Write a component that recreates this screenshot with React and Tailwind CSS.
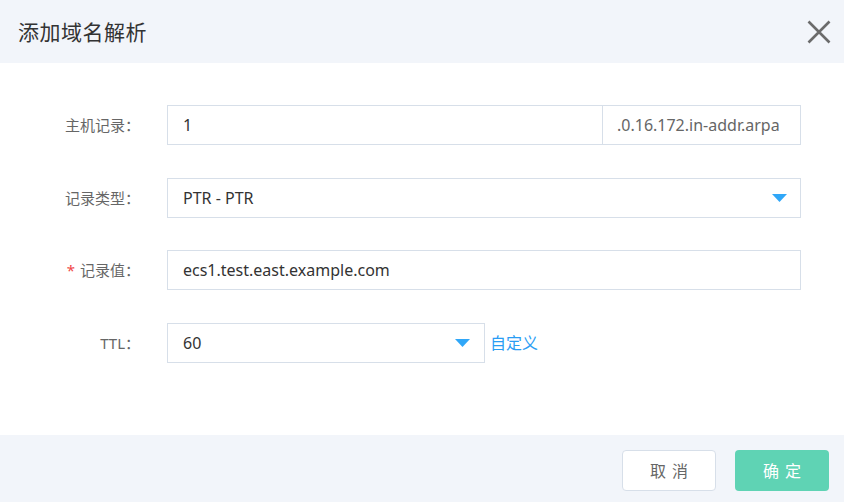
export default function App() {
  const font = { fontFamily: '"Noto Sans", "Noto Sans CJK SC", sans-serif' };
  const Arrow = ({ className }) => (
    <svg className={className} width="15" height="8" viewBox="0 0 15 8">
      <path d="M0 0 H15 L7.5 8 Z" fill="#30a7f8" />
    </svg>
  );
  return (
    <div className="w-[844px] h-[502px] bg-white flex flex-col overflow-hidden" style={font}>
      <div className="h-[63px] bg-[#f2f5fa] flex items-center justify-between pl-[18px] pr-[13px] shrink-0">
        <div className="text-[21px] text-[#333] leading-none font-['Noto_Sans_CJK_SC',sans-serif] tracking-[0.5px]">添加域名解析</div>
        <svg width="24" height="24" viewBox="0 0 24 24" className="mt-[1px]">
          <path d="M1.5 1.5 L22.5 22.5 M22.5 1.5 L1.5 22.5" stroke="#6b6b6b" strokeWidth="2.6" strokeLinecap="butt" />
        </svg>
      </div>
      <div className="flex-1 flex flex-col pt-[42px]">
        <div className="flex items-center h-[40px]">
          <div className="w-[140px] text-right text-[15px] text-[#666]">主机记录：</div>
          <div className="ml-[27px] w-[634px] h-[40px] flex border border-[#d7dfe9]">
            <div className="flex-1 flex items-center pl-[15px] text-[16px] text-[#333]">1</div>
            <div className="w-[198px] border-l border-[#d7dfe9] flex items-center pl-[14px] text-[16px] text-[#666]">.0.16.172.in-addr.arpa</div>
          </div>
        </div>
        <div className="flex items-center h-[40px] mt-[33px]">
          <div className="w-[140px] text-right text-[15px] text-[#666]">记录类型：</div>
          <div className="ml-[27px] w-[634px] h-[40px] flex items-center justify-between border border-[#d7dfe9] pl-[15px] pr-[13px]">
            <span className="text-[16px] text-[#333]">PTR - PTR</span>
            <Arrow />
          </div>
        </div>
        <div className="flex items-center h-[40px] mt-[32px]">
          <div className="w-[140px] text-right text-[15px] text-[#666]"><span className="text-[#f04848] mr-[5px]">*</span>记录值：</div>
          <div className="ml-[27px] w-[634px] h-[40px] flex items-center border border-[#d7dfe9] pl-[15px]">
            <span className="text-[16px] text-[#333]">ecs1.test.east.example.com</span>
          </div>
        </div>
        <div className="flex items-center h-[40px] mt-[33px]">
          <div className="w-[140px] text-right text-[15px] text-[#666]">TTL：</div>
          <div className="ml-[27px] w-[318px] h-[40px] flex items-center justify-between border border-[#d7dfe9] pl-[15px] pr-[14px]">
            <span className="text-[16px] text-[#333]">60</span>
            <Arrow />
          </div>
          <span className="ml-[5px] text-[16px] text-[#2a9df4]">自定义</span>
        </div>
      </div>
      <div className="h-[67px] bg-[#f2f5fa] flex items-start justify-end pt-[15px] pr-[15px] gap-[19px] shrink-0">
        <button className="w-[94px] h-[41px] rounded-[4px] border border-[#d7dfe9] bg-white text-[16px] text-[#666] tracking-[6px] pl-[6px]">取消</button>
        <button className="w-[94px] h-[41px] rounded-[4px] bg-[#5fd3b4] text-[16px] text-white tracking-[6px] pl-[6px]">确定</button>
      </div>
    </div>
  );
}
